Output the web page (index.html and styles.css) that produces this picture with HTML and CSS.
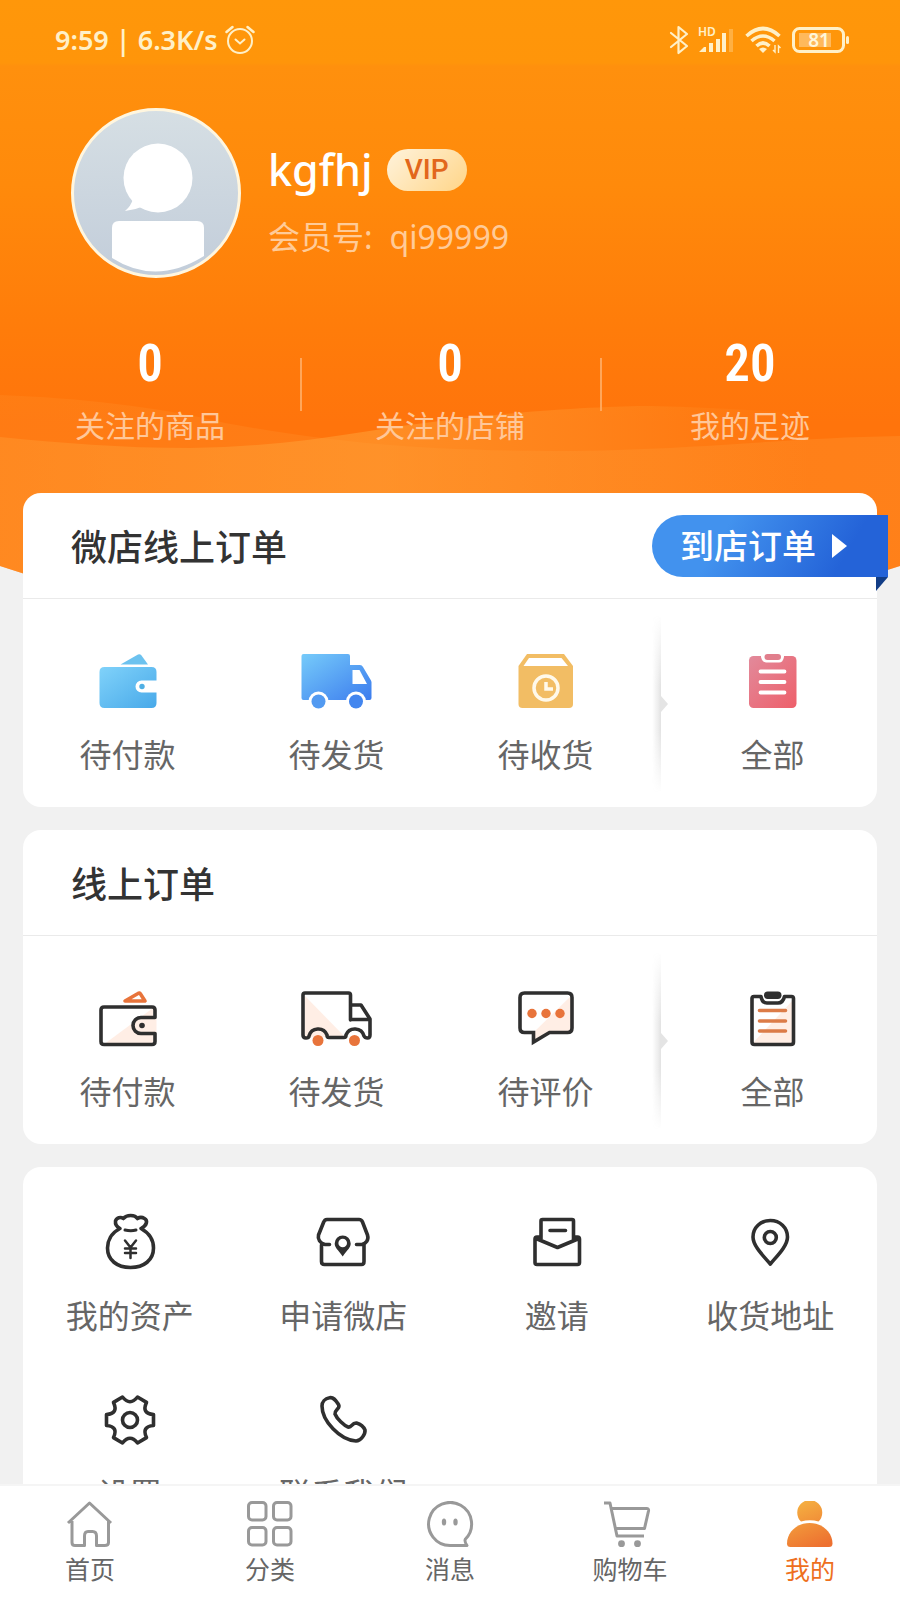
FILE: index.html
```html
<!DOCTYPE html>
<html lang="zh-CN">
<head>
<meta charset="utf-8">
<meta name="viewport" content="width=device-width, initial-scale=1">
<title>我的</title>
<link rel="stylesheet" href="styles.css">
</head>
<body>
<div class="app">
  <main class="content">
    <svg class="hero-bg" viewBox="0 0 900 660" preserveAspectRatio="none" aria-hidden="true">
      <defs>
        <linearGradient id="sky" x1="0" y1="0" x2="0" y2="1">
          <stop offset="0" stop-color="#ff970a"/><stop offset=".095" stop-color="#ff950a"/>
          <stop offset=".1" stop-color="#ff900d"/><stop offset=".28" stop-color="#ff8a0b"/>
          <stop offset=".5" stop-color="#ff7c0a"/><stop offset=".64" stop-color="#ff740c"/>
          <stop offset="1" stop-color="#ff740c"/>
        </linearGradient>
        <linearGradient id="waveA" x1="0" x2="1">
          <stop offset="0" stop-color="#ffa63c" stop-opacity=".32"/><stop offset=".42" stop-color="#ffa63c" stop-opacity=".5"/>
          <stop offset=".65" stop-color="#ffa63c" stop-opacity=".28"/><stop offset=".9" stop-color="#ffa63c" stop-opacity="0"/>
        </linearGradient>
        <linearGradient id="waveB" x1="0" x2="1">
          <stop offset="0" stop-color="#ffa03c" stop-opacity=".16"/><stop offset="1" stop-color="#ffa03c" stop-opacity=".28"/>
        </linearGradient>
        <clipPath id="heroClip"><path d="M0 0H900V566Q450 716 0 566Z"/></clipPath>
      </defs>
      <g clip-path="url(#heroClip)">
        <rect width="900" height="660" fill="url(#sky)"/>
        <path d="M0 395C80 398 160 407 225 423C330 442 420 451 560 451C700 450 780 438 900 436V660H0Z" fill="url(#waveB)"/>
        <path d="M0 437C60 443 120 448 190 448C310 446 370 428 450 420C530 410 610 406 650 406C740 408 820 414 900 424V660H0Z" fill="url(#waveA)"/>
      </g>
    </svg>

    <header class="hero">
      <div class="status">
        <span class="status-text">9:59 | 6.3K/s</span>
        <svg class="alarm" width="30" height="30" viewBox="0 0 30 30" fill="none" stroke="currentColor" stroke-width="2" stroke-linecap="round" aria-hidden="true"><circle cx="15" cy="16" r="12"/><path d="M10.5 14.5l4.5 4 4.5-4"/><path d="M1.5 7L7.5 2M28.5 7L22.500 2" stroke-width="2.500"/></svg>
        <div class="status-icons">
          <svg width="20" height="30" viewBox="0 0 20 30" fill="none" stroke="currentColor" stroke-width="2.200" stroke-linejoin="round" stroke-linecap="round" aria-hidden="true"><path d="M2 8L18 21L9.500 28V2L18 9L2 22"/></svg>
          <svg width="38" height="38" viewBox="0 -4 38 38" fill="currentColor" aria-hidden="true"><text class="hd" x="0" y="11">HD</text><path d="M1 27l5-5h2v5zM11 18h4v9h-4zM18 14h4v13h-4zM24 8h4v19h-4z"/><path d="M31 4h4v23h-4z" opacity=".3"/></svg>
          <svg width="38" height="30" viewBox="0 0 38 30" fill="none" stroke="currentColor" stroke-width="3.600" aria-hidden="true"><path d="M1.500 11Q18 -4 34.500 11M6.500 16Q18 6 29.500 16M11.500 21Q18 15 24.500 21"/><path d="M14 24q4-3 8 0l-4 4z" fill="currentColor" stroke="none"/><path d="M30 20v7l-2-2M33.500 28v-7l2 2" stroke-width="1.400"/></svg>
          <svg width="58" height="30" viewBox="0 0 58 30" fill="none" aria-hidden="true"><rect x="1.500" y="3.500" width="50" height="23" rx="6" stroke="currentColor" stroke-width="3"/><rect x="7" y="8" width="32" height="14" fill="#ffb95c"/><rect x="54" y="11" width="3" height="8" rx="1.500" fill="currentColor"/><text class="charge" x="27" y="22" text-anchor="middle">81</text></svg>
        </div>
      </div>

      <section class="profile">
        <svg class="avatar" width="170" height="170" viewBox="0 0 170 170" role="img" aria-label="头像">
          <defs><linearGradient id="av" x1="0" y1="0" x2="0" y2="1"><stop offset="0" stop-color="#d6dfe4"/><stop offset="1" stop-color="#c2cdda"/></linearGradient></defs>
          <circle cx="85" cy="85" r="83.500" fill="url(#av)" stroke="#fff6df" stroke-width="3"/>
          <circle cx="87" cy="70" r="34.500" fill="#fff"/>
          <path d="M62 91Q60 98 54 103Q64 102 73 98Z" fill="#fff"/>
          <path d="M41 120q0-7 7-7h78q7 0 7 7v28Q85 178 41 150Z" fill="#fff"/>
        </svg>
        <div class="who">
          <div class="name-row"><h1 class="name">kgfhj</h1><span class="vip">VIP</span></div>
          <p class="member"><span>会员号:</span><span>qi99999</span></p>
        </div>
      </section>

      <nav class="stats" aria-label="关注">
        <a class="stat" href="#goods"><strong class="stat-num">0</strong><span class="stat-label">关注的商品</span></a>
        <a class="stat" href="#shops"><strong class="stat-num">0</strong><span class="stat-label">关注的店铺</span></a>
        <a class="stat" href="#history"><strong class="stat-num">20</strong><span class="stat-label">我的足迹</span></a>
      </nav>
    </header>

    <div class="cards">
      <section class="card">
        <div class="card-head"><h2 class="card-title">微店线上订单</h2>
          <a class="ribbon" href="#store-orders">到店订单<svg width="15" height="24" viewBox="0 0 15 24" aria-hidden="true"><path d="M0 0L15 12L0 24Z" fill="#fff"/></svg></a>
        </div>
        <div class="orders">
          <a class="item" href="#pay">
            <svg class="icon" viewBox="0 0 72 60" aria-hidden="true"><defs><linearGradient id="g1" x1="0" y1="0" x2="1" y2="1"><stop offset="0" stop-color="#80d2fa"/><stop offset="1" stop-color="#48a9e9"/></linearGradient></defs><path d="M28.500 13.500L46 3.500Q48 2.500 49.500 4.500L56 13.500Z" fill="#6cc2ef"/><path d="M12.500 16H59.500Q64.500 16 64.500 21V29.500H49.500a6 6 0 0 0 0 12H64.500V52Q64.500 57 59.500 57H12.500Q7.500 57 7.500 52V21Q7.500 16 12.500 16Z" fill="url(#g1)"/><circle cx="50" cy="35.500" r="2.700" fill="#4fafe4"/></svg>
            <span class="label">待付款</span></a>
          <a class="item" href="#ship">
            <svg class="icon" viewBox="0 0 72 60" aria-hidden="true"><defs><linearGradient id="g2" x1="0" y1="0" x2="1" y2="1"><stop offset="0" stop-color="#76cbfa"/><stop offset="1" stop-color="#3c7cee"/></linearGradient></defs><path d="M2.500 3H47Q49 3 49 5V14H59Q61 14 62 16L70 29.500L70.500 31V47Q70.500 49 68.500 49H2.500Q.5 49 .5 47V5Q.5 3 2.500 3Z" fill="url(#g2)"/><path d="M51.500 19H58.500L66 33H51.500Z" fill="#fff"/><circle cx="17.500" cy="50.500" r="10" fill="#fff"/><circle cx="55" cy="50.500" r="10" fill="#fff"/><circle cx="17.500" cy="50.500" r="7" fill="#529af1"/><circle cx="55" cy="50.500" r="7" fill="#4386ef"/></svg>
            <span class="label">待发货</span></a>
          <a class="item" href="#receive">
            <svg class="icon" viewBox="0 0 72 60" aria-hidden="true"><path d="M17 3H54L63 15V53Q63 57 59 57H12.500Q8.500 57 8.500 53V15Z" fill="#f2bd64"/><path d="M19 7H51.500L58 15H13.500Z" fill="#fff"/><circle cx="36" cy="37" r="12" fill="none" stroke="#fff9ea" stroke-width="3.500"/><path d="M36 31V38H43" fill="none" stroke="#fff9ea" stroke-width="3.500"/></svg>
            <span class="label">待收货</span></a>
          <svg class="divider" width="18" height="178" viewBox="0 0 18 178" aria-hidden="true"><defs><linearGradient id="sh" x1="0" x2="1"><stop offset="0" stop-color="#999" stop-opacity="0"/><stop offset="1" stop-color="#888" stop-opacity=".24"/></linearGradient><linearGradient id="fade" x1="0" x2="0" y1="0" y2="1"><stop offset="0" stop-color="#000"/><stop offset=".4" stop-color="#fff"/><stop offset=".65" stop-color="#fff"/><stop offset="1" stop-color="#000"/></linearGradient><mask id="fm"><rect width="18" height="178" fill="url(#fade)"/></mask></defs><rect x="2" width="9" height="178" fill="url(#sh)" mask="url(#fm)"/><path d="M11 81L18 89L11 97Z" fill="#e4e4e4"/></svg>
          <a class="item" href="#all">
            <svg class="icon" viewBox="0 0 72 60" aria-hidden="true"><defs><linearGradient id="g3" x1="0" y1="0" x2="1" y2="1"><stop offset="0" stop-color="#e28a9b"/><stop offset="1" stop-color="#ee5f6a"/></linearGradient></defs><rect x="12" y="5" width="47.500" height="52" rx="4.500" fill="url(#g3)"/><path d="M24 3V6Q25 11.500 29 11.500H42Q46 11.500 47 6V3Z" fill="#fff"/><rect x="27.500" y="3" width="16.500" height="6" rx="3" fill="#e17e8c"/><path d="M23.500 20.500H47.500M23.500 31H47.500M23.500 41.500H47.500" stroke="#fff" stroke-width="3.800" stroke-linecap="round"/></svg>
            <span class="label">全部</span></a>
        </div>
      </section>

      <section class="card">
        <div class="card-head"><h2 class="card-title">线上订单</h2></div>
        <div class="orders">
          <a class="item" href="#pay2">
            <svg class="icon line" viewBox="0 0 72 60" aria-hidden="true"><path d="M11 57L61 20V57Z" fill="#ffeee5" stroke="none"/><path d="M42 37.500L50 29.500H64.500V45.500H50Z" fill="#ffeee5" stroke="none"/><path d="M63 29.500V22Q63 19 60 19H12Q9 19 9 22V53.500Q9 56.500 12 56.500H60Q63 56.500 63 53.500V45.500H49a8 8 0 0 1 0-16Z" stroke="none"/><path d="M63 29.500V22Q63 19 60 19H12Q9 19 9 22V53.500Q9 56.500 12 56.500H60Q63 56.500 63 53.500V45.500H49a8 8 0 0 1 0-16H63"/><circle cx="50" cy="37.500" r="2.800" fill="#2f2f2f" stroke="none"/><path d="M33 13L46 5.500Q47.500 4.500 48.500 6L53 13Z" stroke="#e8743b"/></svg>
            <span class="label">待付款</span></a>
          <a class="item" href="#ship2">
            <svg class="icon line" viewBox="0 0 72 60" aria-hidden="true"><path d="M4 8L44 49H4Z" fill="#ffeee5" stroke="none"/><path d="M49.500 32V7Q49.500 5 47.500 5H4Q2 5 2 7V47Q2 50 5 50Q8 50 8 48A9.500 9.500 0 0 1 26 47Q26 49.500 28 49.500H43Q45 49.500 45 47A9.500 9.500 0 0 1 63 48Q64 50 66.500 50Q69 50 69 47V31L60 17H49.500M49.500 31.500H69"/><circle cx="17" cy="52.500" r="5.500" fill="#e8743b" stroke="none"/><circle cx="53.500" cy="52.500" r="5.500" fill="#e8743b" stroke="none"/></svg>
            <span class="label">待发货</span></a>
          <a class="item" href="#review">
            <svg class="icon line" viewBox="0 0 72 60" aria-hidden="true"><path d="M61 8V45H39L23 54V45Z" fill="#ffeee5" stroke="none"/><path d="M14.500 5H57.500Q62 5 62 9.500V40Q62 44.500 57.500 44.500H39.500L23.500 54V44.500H14.500Q10 44.500 10 40V9.500Q10 5 14.500 5Z" stroke-linejoin="miter"/><g fill="#e8743b" stroke="none"><circle cx="22" cy="25.500" r="4.700"/><circle cx="36" cy="25.500" r="4.700"/><circle cx="50" cy="25.500" r="4.700"/></g></svg>
            <span class="label">待评价</span></a>
          <svg class="divider" width="18" height="178" viewBox="0 0 18 178" aria-hidden="true"><rect x="2" width="9" height="178" fill="url(#sh)" mask="url(#fm)"/><path d="M11 81L18 89L11 97Z" fill="#e4e4e4"/></svg>
          <a class="item" href="#all2">
            <svg class="icon line" viewBox="0 0 72 60" aria-hidden="true"><path d="M56 12V56H15Z" fill="#ffeee5" stroke="none"/><path d="M24 8.500H17Q15 8.500 15 10.500V54Q15 56.500 17.500 56.500H54Q56.500 56.500 56.500 54V10.500Q56.500 8.500 54.500 8.500H47.500Q46 15 41 15H30Q25 15 24 8.500Z" stroke="none"/><path d="M24 8.500H17Q15 8.500 15 10.500V54Q15 56.500 17.500 56.500H54Q56.500 56.500 56.500 54V10.500Q56.500 8.500 54.500 8.500H47.500Q46 15 41 15H30Q25 15 24 8.500"/><rect x="27" y="3.500" width="17.500" height="7.500" rx="3.700" fill="#2f2f2f" stroke="none"/><path d="M22.500 22.500H48.500M22.500 33H48.500M22.500 43H48.500" stroke="#dc7c48"/></svg>
            <span class="label">全部</span></a>
        </div>
      </section>

      <section class="card tools">
        <a class="item" href="#assets">
          <svg class="icon line" viewBox="0 0 72 60" aria-hidden="true"><path d="M26 16.500C17 21 13.500 29 13.500 36C13.500 48 23 55.500 36.500 55.500S59.500 48 59.500 36C59.500 28 55 21 47 16.500C53 13.500 54 8.500 50.500 6.500C48 5 45 5.500 43.500 6.500C41 2.500 32.500 2.500 29.500 6.500C26.500 4.500 22.500 5.500 21.500 9C21 13 23 15 26 16.500Z"/><path d="M31 18q6 1.500 11 0" stroke-width="3"/><path d="M31 28.500l5.500 7 5.500-7M36.500 35.500V46M31 36.500h11M31 41h11" stroke-width="2.500"/></svg>
          <span class="label">我的资产</span></a>
        <a class="item" href="#open">
          <svg class="icon line" viewBox="0 0 72 60" aria-hidden="true"><path d="M22.500 32.500H18C13 31.500 10.500 27 11.500 23L16.500 10.500Q17.500 7.500 20 7.500H52Q54.500 7.500 55.500 10L60.500 23C62 28 59 31.500 55 32.500H49.500M14.500 33V49.500Q14.500 52.500 17.500 52.500H54.500Q57 52.500 57 49.500V33"/><path d="M35.700 23.500a8 8 0 0 1 8 8c0 4-3 6-8 13c-5-7-8-9-8-13a8 8 0 0 1 8-8Z" fill="#2f2f2f" stroke="none"/><circle cx="35.700" cy="31" r="4.300" fill="#fff" stroke="none"/></svg>
          <span class="label">申请微店</span></a>
        <a class="item" href="#invite">
          <svg class="icon line" viewBox="0 0 72 60" aria-hidden="true"><path d="M20 27V9Q20 7.500 21.500 7.500H51Q52.500 7.500 52.500 9V27M20 25H16Q14 25 14 27V50.500Q14 52.500 16 52.500H56.500Q58.500 52.500 58.500 50.500V27Q58.500 25 56.500 25H52.500M15 26.500L36.500 35.500L58 26.500M29 18.500H44.500"/></svg>
          <span class="label">邀请</span></a>
        <a class="item" href="#address">
          <svg class="icon line" viewBox="0 0 72 60" aria-hidden="true"><path d="M36.300 8.500C46 8.500 53.500 15.500 53.500 25C53.500 34 43 44 36.300 52C29.500 44 19 34 19 25C19 15.500 26.500 8.500 36.300 8.500Z"/><circle cx="36.300" cy="25.500" r="6"/></svg>
          <span class="label">收货地址</span></a>
        <a class="item" href="#settings">
          <svg class="icon line" viewBox="-36 -30 72 60" aria-hidden="true"><path d="M23.500 -5.500L23.500 5.500Q11.300 6.500 16.500 17.600L7.500 23Q0 13.500 -7.500 23L-16.500 17.600Q-11.300 6.500 -23.500 5.500L-23.500 -5.500Q-11.300 -6.500 -16.500 -17.600L-7.500 -23Q0 -13.500 7.500 -23L16.500 -17.600Q11.300 -6.500 23.500 -5.500Z"/><circle r="7.500"/></svg>
          <span class="label">设置</span></a>
        <a class="item" href="#contact">
          <svg class="icon line" viewBox="0 0 72 60" aria-hidden="true"><path d="M22.500 7.800C27 6.800 29 11 31.500 14.500C34 18.500 27.500 19.500 28 24C30 29 37 35.500 41 37C45 38 44.500 32.500 49.500 33C53 34 56.500 36.500 58 40C58.500 44 54 51 49 51C33 50 15 31 15 16C15 12 18 8.500 22.500 7.800Z"/></svg>
          <span class="label">联系我们</span></a>
      </section>
    </div>
  </main>

  <nav class="tabbar" aria-label="主导航">
    <a class="tab" href="#home"><svg class="tab-icon" viewBox="-4 0 56 48" aria-hidden="true"><path d="M2 22L23.500 2L45 22M6 20V41.500Q6 44.500 9 44.500H18.500V35Q18.500 30.500 22 30.500H26.500Q30.500 30.500 30.500 35V44.500H38.500Q42.500 44.500 42.500 41.500V20"/></svg>首页</a>
    <a class="tab" href="#category"><svg class="tab-icon" viewBox="-4 0 56 48" aria-hidden="true"><rect x="2.500" y="1.500" width="17.500" height="17.500" rx="3.500"/><rect x="27.500" y="1.500" width="17.500" height="17.500" rx="3.500"/><rect x="2.500" y="26.500" width="17.500" height="17.500" rx="3.500"/><rect x="27.500" y="26.500" width="17.500" height="17.500" rx="3.500"/></svg>分类</a>
    <a class="tab" href="#message"><svg class="tab-icon" viewBox="-4 0 56 48" aria-hidden="true"><path d="M24 44.500A21.500 21.500 0 1 1 39.500 38Q38 40 41 44.500Z"/><ellipse cx="18" cy="21" rx="2.200" ry="3.600" fill="#999" stroke="none"/><ellipse cx="29.500" cy="21" rx="2.200" ry="3.600" fill="#999" stroke="none"/></svg>消息</a>
    <a class="tab" href="#cart"><svg class="tab-icon" viewBox="-4 0 56 48" aria-hidden="true"><path d="M-2 2H4L11 35H38M6 7.500H40.500Q43 7.500 42.500 10L38.500 27.500H10"/><circle cx="15.500" cy="42.700" r="3.400" fill="#999" stroke="none"/><circle cx="31.500" cy="42.700" r="3.400" fill="#999" stroke="none"/></svg>购物车</a>
    <a class="tab active" href="#me" aria-current="page"><svg class="tab-icon" viewBox="-4 0 56 48" aria-hidden="true"><defs><linearGradient id="me" gradientUnits="userSpaceOnUse" x1="15" y1="0" x2="34" y2="46"><stop offset="0" stop-color="#f5b041"/><stop offset="1" stop-color="#ed7030"/></linearGradient></defs><g fill="url(#me)" stroke="none"><path d="M15 20.500A12.500 12.500 0 1 1 32.500 20.500Q24 18 15 20.500Z"/><path d="M23.700 22C37 22 46.500 32 46.500 42.500Q46.500 46 43 46H4.500Q1 46 1 42.500C1 32 10 22 23.700 22Z"/></g></svg>我的</a>
  </nav>
</div>
</body>
</html>
```
FILE: styles.css
```css
* { box-sizing: border-box; }

body {
  margin: 0;
  background: #f1f1f1;
  color: #666;
  font-family: "Noto Sans", "Noto Sans CJK SC", sans-serif;
}

h1, h2, p { margin: 0; font-weight: 400; }
a { color: inherit; text-decoration: none; }
svg { display: block; flex: none; }

.app {
  display: flex;
  flex-direction: column;
  height: 100vh;
}

.content {
  position: relative;
  flex: 1;
  min-height: 0;
  overflow-y: auto;
  scrollbar-width: none;
}

.hero-bg {
  position: absolute;
  top: 0;
  left: 0;
  width: 100%;
  height: 660px;
}

.hero { position: relative; color: #fff; }

.status {
  display: flex;
  align-items: center;
  height: 79px;
  padding: 0 50px 0 55px;
  color: #fff0c8;
}
.status-text { font-size: 27px; font-weight: 600; }
.alarm { margin-left: 7px; }
.status-icons {
  display: flex;
  align-items: center;
  gap: 9px;
  margin-left: auto;
}
.hd { font-size: 12px; font-weight: 600; }
.charge { font-size: 19px; font-weight: 600; fill: #fff6d8; }

.profile {
  display: flex;
  gap: 27px;
  padding: 29px 48px 50px 71px;
}
.who { padding-top: 32px; }
.name-row {
  display: flex;
  align-items: center;
  gap: 14px;
  height: 60px;
}
.name { font-size: 43px; line-height: 60px; font-weight: 500; }
.vip {
  width: 80px;
  border-radius: 21px;
  background: linear-gradient(135deg, #fff3dc, #ffd588);
  color: #e2671c;
  font: 500 28px/42px Roboto, sans-serif;
  text-align: center;
}
.member {
  display: flex;
  gap: 17px;
  padding-top: 13px;
  color: #ffcb98;
  font-size: 32px;
  line-height: 48px;
}

.stats {
  display: grid;
  grid-template-columns: repeat(3, 1fr);
  padding-bottom: 49px;
}
.stat {
  display: flex;
  flex-direction: column;
  align-items: center;
  gap: 8px;
}
.stat + .stat {
  background: linear-gradient(#ffa65a, #ffa65a) left 30px / 2px 53px no-repeat;
}
.stat-num {
  font: 600 51px/72px "Roboto Condensed", "Liberation Sans Narrow", Roboto, sans-serif;
}
.stat-label { color: #ffc799; font-size: 30px; line-height: 36px; }

.cards {
  position: relative;
  display: flex;
  flex-direction: column;
  gap: 23px;
  padding: 0 23px 24px;
}
.card { border-radius: 18px; background: #fff; }
.card-head {
  display: flex;
  align-items: center;
  justify-content: space-between;
  height: 106px;
  padding-left: 48px;
  border-bottom: 1px solid #eaeaea;
}
.card-title {
  padding-top: 4px;
  color: #333;
  font-size: 36px;
  font-weight: 500;
  line-height: 48px;
}

.ribbon {
  position: relative;
  display: flex;
  align-items: center;
  gap: 16px;
  margin-right: -11px;
  padding: 0 41px 0 28px;
  border-radius: 31px 0 0 31px;
  background: linear-gradient(120deg, #4292ee 30%, #2463d8 80%);
  color: #fff;
  font-size: 34px;
  font-weight: 500;
  line-height: 62px;
}
.ribbon::after {
  content: "";
  position: absolute;
  top: 100%;
  right: 0;
  border-top: 14px solid #123d86;
  border-right: 12px solid transparent;
}

.orders { display: flex; padding: 52px 0 28px; }
.orders .item { flex: 1; }
.divider { margin: -36px 0 -14px; }

.item {
  display: flex;
  flex-direction: column;
  align-items: center;
  gap: 20px;
}
.icon { width: 72px; height: 60px; }
.line {
  fill: none;
  stroke: #2f2f2f;
  stroke-width: 3.600;
  stroke-linecap: round;
  stroke-linejoin: round;
}
.label { font-size: 32px; line-height: 48px; }

.tools {
  display: grid;
  grid-template-columns: repeat(4, 1fr);
  row-gap: 50px;
  padding: 45px 0 40px;
}

.tabbar {
  display: grid;
  grid-template-columns: repeat(5, 1fr);
  height: 116px;
  border-top: 2px solid #f5f5f5;
  background: #fff;
}
.tab {
  display: flex;
  flex-direction: column;
  align-items: center;
  padding-top: 15px;
  font-size: 25px;
  line-height: 40px;
}
.tab-icon {
  width: 56px;
  height: 48px;
  fill: none;
  stroke: #999;
  stroke-width: 3;
  stroke-linejoin: round;
}
.active { color: #ee6f20; }
```
